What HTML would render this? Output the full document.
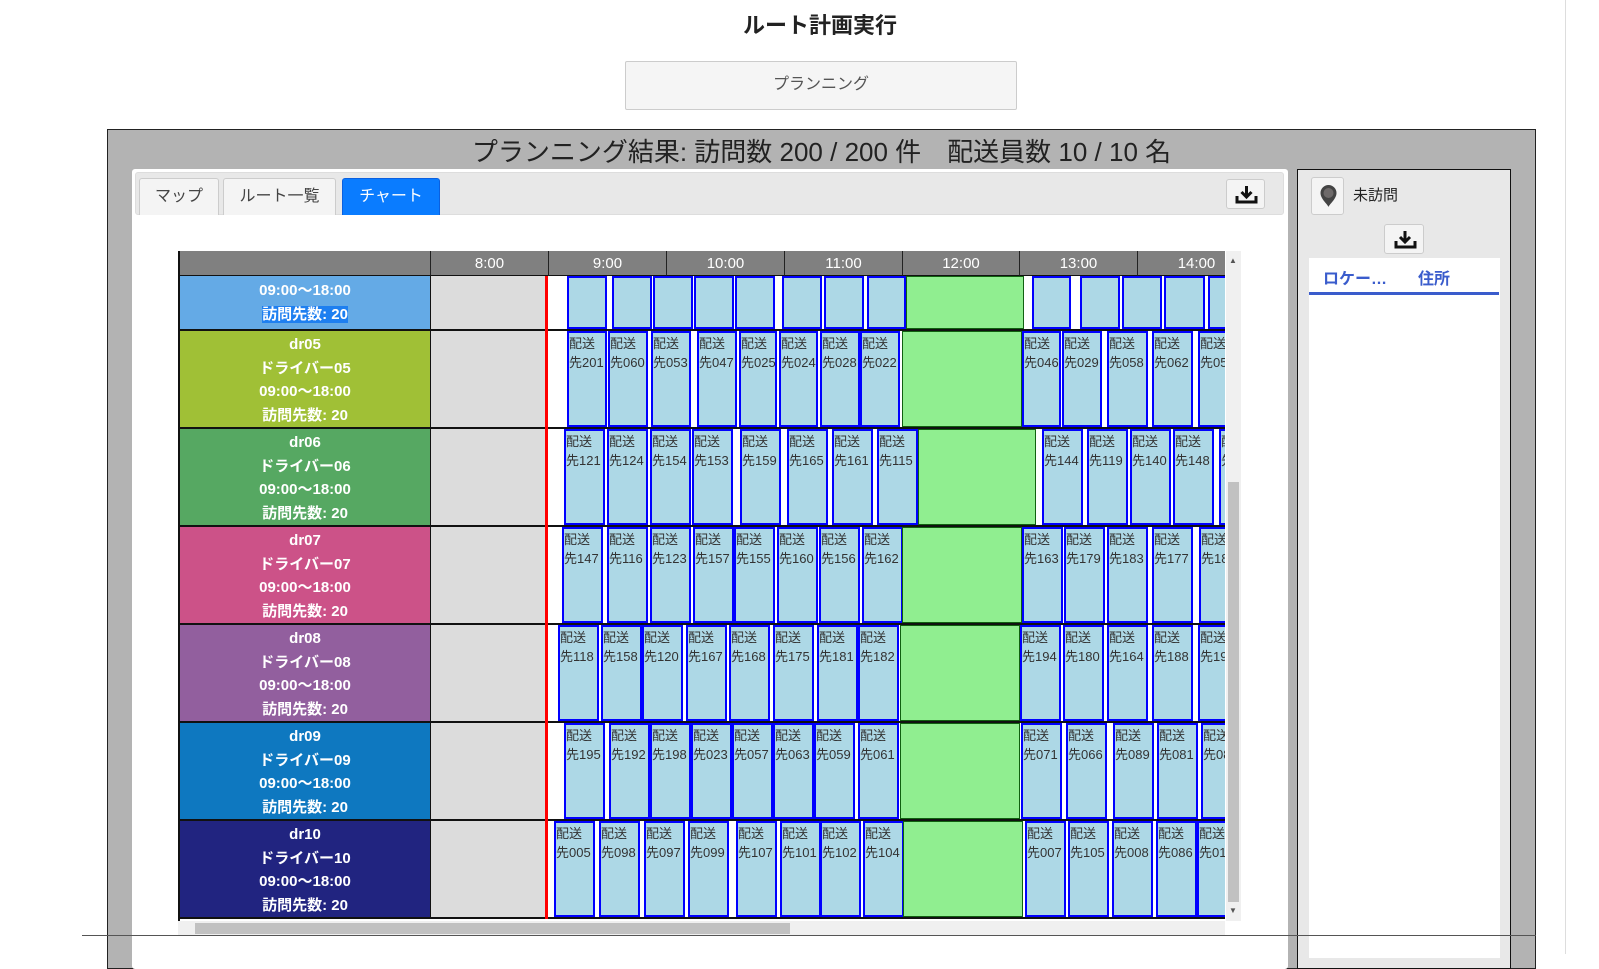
<!DOCTYPE html>
<html><head><meta charset="utf-8">
<style>
*{box-sizing:border-box;margin:0;padding:0}
body{width:1599px;height:954px;overflow:hidden;background:#fff;font-family:"Liberation Sans","Noto Sans CJK JP",sans-serif;position:relative}
.a{position:absolute}
.t{left:0;width:1640px;top:8px;text-align:center;font-size:22px;font-weight:bold;color:#222}
.btn{left:625px;top:61px;width:392px;height:49px;background:#f5f5f5;border:1px solid #ccc;border-radius:2px;text-align:center;line-height:46px;font-size:16px;color:#555}
.panel{left:107px;top:129px;width:1429px;height:840px;background:#b3b3b3;border:1px solid #222}
.h{left:107px;width:1429px;top:132px;text-align:center;font-size:26px;color:#222}
.card{left:132px;top:169px;width:1156px;height:800px;background:#fff;border-radius:3px}
.tabbar{left:135px;top:172px;width:1149px;height:43px;background:#e8e8e8;border:1px solid #ddd;border-radius:3px}
.tab{top:178px;height:37px;background:#f4f4f4;border:1px solid #ccc;border-bottom:none;border-radius:3px 3px 0 0;text-align:center;line-height:36px;font-size:16px;color:#444}
.ib{background:#f4f4f4;border:1px solid #ccc;border-radius:3px}
.rp{left:1297px;top:169px;width:214px;height:800px;background:#e8e8e8;border:1px solid #111}
.clip{left:178px;top:251px;width:1047px;height:670px;overflow:hidden;border-left:2px solid #111}
.in{left:-178px;top:-251px;width:1300px;height:1000px}
.hd{top:251px;height:25px;background:#808080;color:#fff;font-size:15px;line-height:25px;text-align:center;border-right:1px solid #222;border-bottom:1px solid #111}
.lb{left:178px;width:251px;color:#fff;font-weight:bold;font-size:15px;text-align:center;line-height:23.5px;border-bottom:2px solid #111;border-right:1px solid #111}
.gr{left:429px;width:115px;background:#dcdcdc;border-bottom:2px solid #111}
.rw{left:546px;width:700px;border-bottom:2px solid #111}
.b{position:absolute;top:0;bottom:0;background:#add8e6;border:2px solid #00f;font-size:13px;color:#333;line-height:19px;padding-top:1px;white-space:nowrap;overflow:hidden;font-style:normal}
.g{position:absolute;top:0;bottom:0;background:#90ee90;border:1.5px solid #106010}
</style></head><body>
<div class="a t">ルート計画実行</div>
<div class="a btn">プランニング</div>
<div class="a panel"></div>
<div class="a h">プランニング結果: 訪問数 200 / 200 件　配送員数 10 / 10 名</div>
<div class="a card"></div>
<div class="a tabbar"></div>
<div class="a tab" style="left:139px;width:80px">マップ</div>
<div class="a tab" style="left:223px;width:113px">ルート一覧</div>
<div class="a tab" style="left:342px;width:98px;background:#0a7cff;border-color:#0a60e0;color:#fff">チャート</div>
<div class="a ib" style="left:1226px;top:179px;width:39px;height:30px"><svg width="39" height="30" viewBox="0 0 39 30"><path d="M19.5 6v10M14.5 12l5 5 5-5" stroke="#111" stroke-width="3" fill="none"/><path d="M10 16v6h19v-6" stroke="#111" stroke-width="3" fill="none"/></svg></div>
<div class="a rp"></div>
<div class="a ib" style="left:1311px;top:177px;width:33px;height:38px"><svg width="33" height="38" viewBox="0 0 33 38"><path d="M16.5 29c-1-3-8-8-8-14a8 8 0 0 1 16 0c0 6-7 11-8 14z" fill="#444"/><circle cx="16.5" cy="15" r="5" fill="#6e6a6a"/></svg></div>
<div class="a" style="left:1353px;top:184px;font-size:15px;color:#222">未訪問</div>
<div class="a ib" style="left:1384px;top:224px;width:40px;height:30px"><svg width="40" height="30" viewBox="0 0 40 30"><path d="M20 6v10M15 12l5 5 5-5" stroke="#111" stroke-width="3" fill="none"/><path d="M11 16v6h19v-6" stroke="#111" stroke-width="3" fill="none"/></svg></div>
<div class="a" style="left:1309px;top:258px;width:191px;height:700px;background:#fff"></div>
<div class="a" style="left:1309px;top:292px;width:190px;height:3px;background:#3a5ccc"></div>
<div class="a" style="left:1323px;top:265px;font-size:16px;font-weight:bold;color:#3a5ccc">ロケー…</div>
<div class="a" style="left:1418px;top:265px;font-size:16px;font-weight:bold;color:#3a5ccc">住所</div>
<div class="a" style="left:1226px;top:251px;width:15px;height:670px;background:#f0f0f0"></div>
<div class="a" style="left:1228px;top:482px;width:11px;height:420px;background:#c1c1c1"></div>
<div class="a" style="left:1229px;top:256px;font-size:8px;color:#555">▲</div>
<div class="a" style="left:1229px;top:906px;font-size:8px;color:#555">▼</div>
<div class="a" style="left:178px;top:921px;width:1047px;height:14px;background:#f0f0f0"></div>
<div class="a" style="left:195px;top:923px;width:595px;height:11px;background:#c1c1c1"></div>
<div class="a" style="left:82px;top:935px;width:1454px;height:1px;background:#555"></div>
<div class="a" style="left:1565px;top:0;width:1px;height:954px;background:#ddd"></div>
<div class="a clip"><div class="a in">
<div class="a hd" style="left:178px;width:251px"></div>
<div class="a hd" style="left:429px;width:118px">8:00</div>
<div class="a hd" style="left:547px;width:118px">9:00</div>
<div class="a hd" style="left:665px;width:118px">10:00</div>
<div class="a hd" style="left:783px;width:118px">11:00</div>
<div class="a hd" style="left:901px;width:117px">12:00</div>
<div class="a hd" style="left:1018px;width:118px">13:00</div>
<div class="a hd" style="left:1136px;width:118px">14:00</div>

<div class="a lb" style="top:276px;height:55px;background:#64aae6;padding-top:3px">09:00〜18:00<br><span style="background:#1e7ff0">訪問先数: 20</span></div>
<div class="a gr" style="top:276px;height:55px"></div>
<div class="a rw" style="top:276px;height:55px">
<i class="b" style="left:19px;width:40px"></i><i class="b" style="left:64px;width:40px"></i><i class="b" style="left:105px;width:40px"></i><i class="b" style="left:146px;width:40px"></i><i class="b" style="left:187px;width:40px"></i><i class="b" style="left:234px;width:40px"></i><i class="b" style="left:276px;width:40px"></i><i class="b" style="left:319px;width:39px"></i><i class="g" style="left:358px;width:118px"></i><i class="b" style="left:484px;width:39px"></i><i class="b" style="left:532px;width:40px"></i><i class="b" style="left:574px;width:40px"></i><i class="b" style="left:616px;width:41px"></i><i class="b" style="left:660px;width:40px"></i></div>

<div class="a lb" style="top:331px;height:98px;background:#a0c036;padding-top:2px">dr05<br>ドライバー05<br>09:00〜18:00<br>訪問先数: 20</div>
<div class="a gr" style="top:331px;height:98px"></div>
<div class="a rw" style="top:331px;height:98px">
<i class="b" style="left:19px;width:40px">配送<br>先201</i><i class="b" style="left:60px;width:40px">配送<br>先060</i><i class="b" style="left:103px;width:40px">配送<br>先053</i><i class="b" style="left:149px;width:40px">配送<br>先047</i><i class="b" style="left:191px;width:38px">配送<br>先025</i><i class="b" style="left:231px;width:39px">配送<br>先024</i><i class="b" style="left:272px;width:40px">配送<br>先028</i><i class="b" style="left:312px;width:40px">配送<br>先022</i><i class="g" style="left:354px;width:120px"></i><i class="b" style="left:474px;width:39px">配送<br>先046</i><i class="b" style="left:514px;width:40px">配送<br>先029</i><i class="b" style="left:559px;width:41px">配送<br>先058</i><i class="b" style="left:604px;width:41px">配送<br>先062</i><i class="b" style="left:650px;width:40px">配送<br>先05</i></div>

<div class="a lb" style="top:429px;height:98px;background:#56a862;padding-top:2px">dr06<br>ドライバー06<br>09:00〜18:00<br>訪問先数: 20</div>
<div class="a gr" style="top:429px;height:98px"></div>
<div class="a rw" style="top:429px;height:98px">
<i class="b" style="left:16px;width:41px">配送<br>先121</i><i class="b" style="left:59px;width:41px">配送<br>先124</i><i class="b" style="left:102px;width:41px">配送<br>先154</i><i class="b" style="left:144px;width:41px">配送<br>先153</i><i class="b" style="left:192px;width:41px">配送<br>先159</i><i class="b" style="left:239px;width:41px">配送<br>先165</i><i class="b" style="left:284px;width:41px">配送<br>先161</i><i class="b" style="left:329px;width:41px">配送<br>先115</i><i class="g" style="left:370px;width:118px"></i><i class="b" style="left:494px;width:41px">配送<br>先144</i><i class="b" style="left:539px;width:41px">配送<br>先119</i><i class="b" style="left:582px;width:41px">配送<br>先140</i><i class="b" style="left:625px;width:41px">配送<br>先148</i><i class="b" style="left:671px;width:40px">配送<br>先</i></div>

<div class="a lb" style="top:527px;height:98px;background:#cc5288;padding-top:2px">dr07<br>ドライバー07<br>09:00〜18:00<br>訪問先数: 20</div>
<div class="a gr" style="top:527px;height:98px"></div>
<div class="a rw" style="top:527px;height:98px">
<i class="b" style="left:14px;width:41px">配送<br>先147</i><i class="b" style="left:59px;width:41px">配送<br>先116</i><i class="b" style="left:102px;width:41px">配送<br>先123</i><i class="b" style="left:145px;width:41px">配送<br>先157</i><i class="b" style="left:186px;width:41px">配送<br>先155</i><i class="b" style="left:229px;width:41px">配送<br>先160</i><i class="b" style="left:271px;width:41px">配送<br>先156</i><i class="b" style="left:314px;width:41px">配送<br>先162</i><i class="g" style="left:354px;width:120px"></i><i class="b" style="left:474px;width:41px">配送<br>先163</i><i class="b" style="left:516px;width:41px">配送<br>先179</i><i class="b" style="left:559px;width:41px">配送<br>先183</i><i class="b" style="left:604px;width:41px">配送<br>先177</i><i class="b" style="left:651px;width:40px">配送<br>先18</i></div>

<div class="a lb" style="top:625px;height:98px;background:#925f9e;padding-top:2px">dr08<br>ドライバー08<br>09:00〜18:00<br>訪問先数: 20</div>
<div class="a gr" style="top:625px;height:98px"></div>
<div class="a rw" style="top:625px;height:98px">
<i class="b" style="left:10px;width:41px">配送<br>先118</i><i class="b" style="left:53px;width:41px">配送<br>先158</i><i class="b" style="left:94px;width:41px">配送<br>先120</i><i class="b" style="left:138px;width:41px">配送<br>先167</i><i class="b" style="left:181px;width:41px">配送<br>先168</i><i class="b" style="left:225px;width:41px">配送<br>先175</i><i class="b" style="left:269px;width:41px">配送<br>先181</i><i class="b" style="left:310px;width:41px">配送<br>先182</i><i class="g" style="left:352px;width:120px"></i><i class="b" style="left:472px;width:41px">配送<br>先194</i><i class="b" style="left:515px;width:41px">配送<br>先180</i><i class="b" style="left:559px;width:41px">配送<br>先164</i><i class="b" style="left:604px;width:41px">配送<br>先188</i><i class="b" style="left:650px;width:40px">配送<br>先19</i></div>

<div class="a lb" style="top:723px;height:98px;background:#0e78c0;padding-top:2px">dr09<br>ドライバー09<br>09:00〜18:00<br>訪問先数: 20</div>
<div class="a gr" style="top:723px;height:98px"></div>
<div class="a rw" style="top:723px;height:98px">
<i class="b" style="left:16px;width:41px">配送<br>先195</i><i class="b" style="left:61px;width:41px">配送<br>先192</i><i class="b" style="left:102px;width:41px">配送<br>先198</i><i class="b" style="left:143px;width:41px">配送<br>先023</i><i class="b" style="left:184px;width:41px">配送<br>先057</i><i class="b" style="left:225px;width:41px">配送<br>先063</i><i class="b" style="left:266px;width:41px">配送<br>先059</i><i class="b" style="left:310px;width:41px">配送<br>先061</i><i class="g" style="left:352px;width:120px"></i><i class="b" style="left:473px;width:41px">配送<br>先071</i><i class="b" style="left:518px;width:41px">配送<br>先066</i><i class="b" style="left:565px;width:41px">配送<br>先089</i><i class="b" style="left:609px;width:41px">配送<br>先081</i><i class="b" style="left:653px;width:40px">配送<br>先08</i></div>

<div class="a lb" style="top:821px;height:98px;background:#212480;padding-top:2px">dr10<br>ドライバー10<br>09:00〜18:00<br>訪問先数: 20</div>
<div class="a gr" style="top:821px;height:98px"></div>
<div class="a rw" style="top:821px;height:98px">
<i class="b" style="left:6px;width:41px">配送<br>先005</i><i class="b" style="left:51px;width:41px">配送<br>先098</i><i class="b" style="left:96px;width:41px">配送<br>先097</i><i class="b" style="left:140px;width:41px">配送<br>先099</i><i class="b" style="left:188px;width:41px">配送<br>先107</i><i class="b" style="left:232px;width:41px">配送<br>先101</i><i class="b" style="left:272px;width:41px">配送<br>先102</i><i class="b" style="left:315px;width:41px">配送<br>先104</i><i class="g" style="left:355px;width:120px"></i><i class="b" style="left:477px;width:41px">配送<br>先007</i><i class="b" style="left:520px;width:41px">配送<br>先105</i><i class="b" style="left:564px;width:41px">配送<br>先008</i><i class="b" style="left:608px;width:41px">配送<br>先086</i><i class="b" style="left:649px;width:40px">配送<br>先01</i></div>

<div class="a" style="left:543px;top:276px;width:3px;height:643px;background:#f00"></div>
</div></div>
</body></html>
